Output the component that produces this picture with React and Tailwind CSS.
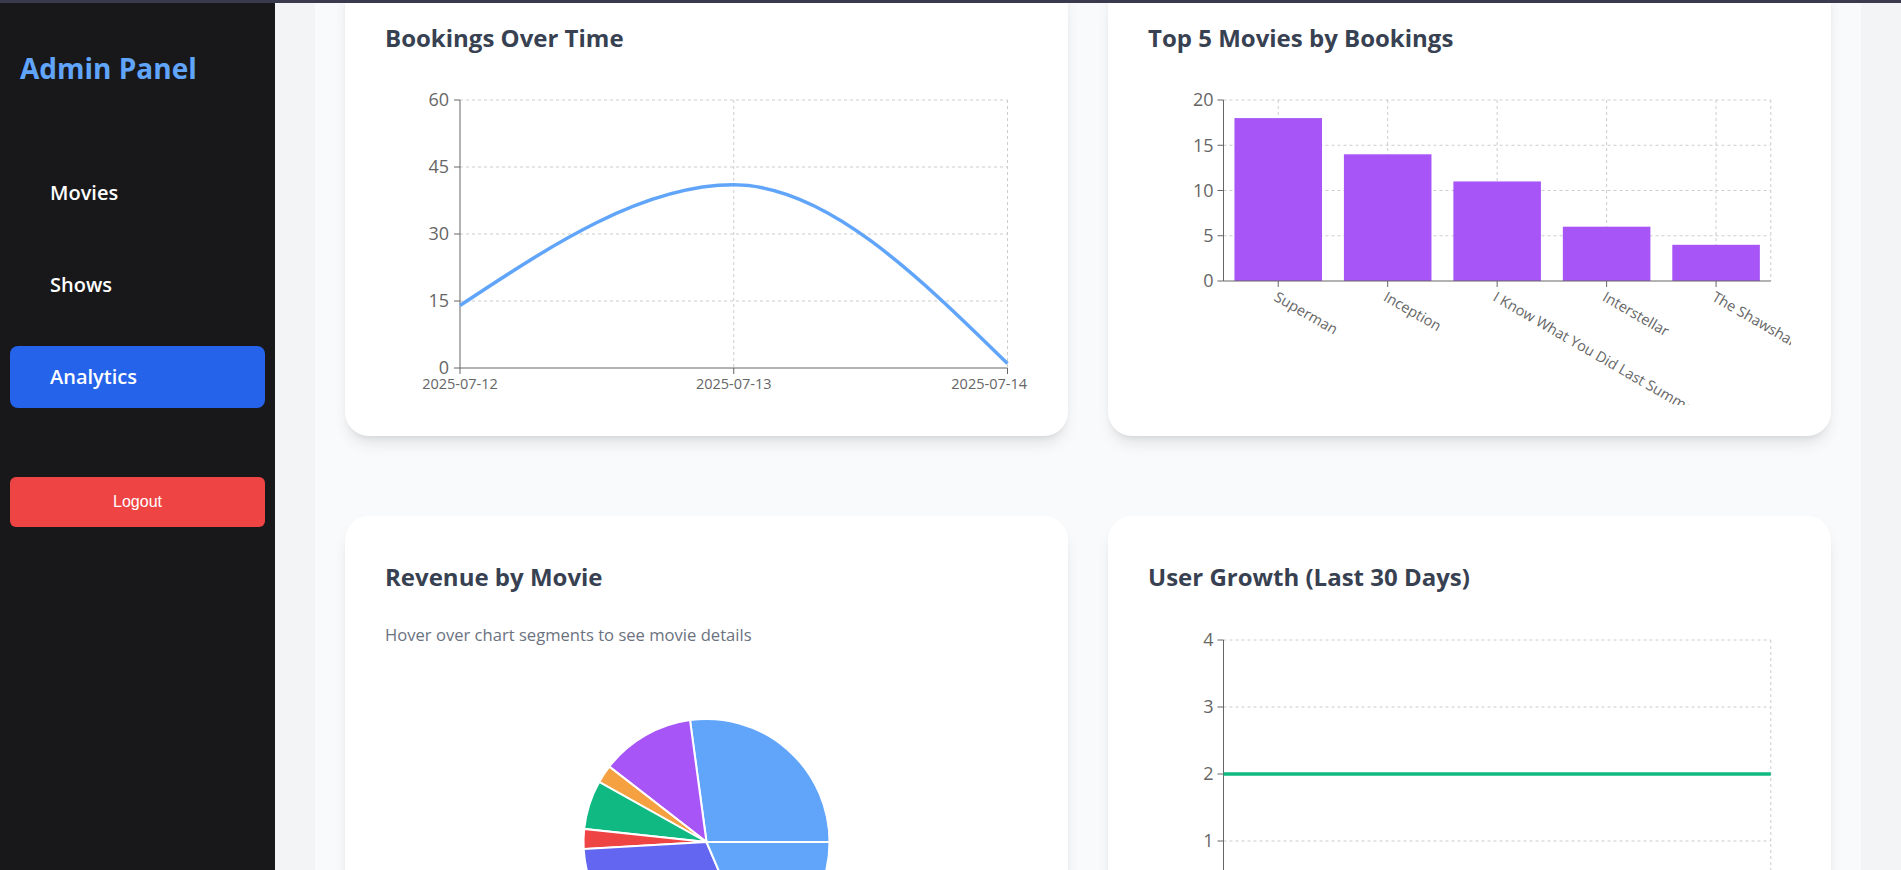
import React from "react";

const FONT = "'Open Sans', 'Noto Sans', sans-serif";
const GRID = "#ccc";
const AXIS = "#666";

function monotone(pts) {
  const n = pts.length;
  const t = new Array(n).fill(0);
  const sign = (x) => (x < 0 ? -1 : 1);
  for (let i = 1; i < n - 1; i++) {
    const [x0, y0] = pts[i - 1];
    const [x1, y1] = pts[i];
    const [x2, y2] = pts[i + 1];
    const h0 = x1 - x0, h1 = x2 - x1;
    const s0 = (y1 - y0) / h0, s1 = (y2 - y1) / h1;
    const p = (s0 * h1 + s1 * h0) / (h0 + h1);
    t[i] = (sign(s0) + sign(s1)) * Math.min(Math.abs(s0), Math.abs(s1), 0.5 * Math.abs(p)) || 0;
  }
  t[0] = (3 * (pts[1][1] - pts[0][1]) / (pts[1][0] - pts[0][0]) - t[1]) / 2;
  t[n - 1] = (3 * (pts[n - 1][1] - pts[n - 2][1]) / (pts[n - 1][0] - pts[n - 2][0]) - t[n - 2]) / 2;
  let d = `M${pts[0][0]},${pts[0][1]}`;
  for (let i = 0; i < n - 1; i++) {
    const [x0, y0] = pts[i];
    const [x1, y1] = pts[i + 1];
    const dx = (x1 - x0) / 3;
    d += `C${x0 + dx},${y0 + dx * t[i]},${x1 - dx},${y1 - dx * t[i + 1]},${x1},${y1}`;
  }
  return d;
}

function BookingsChart() {
  const L = 75, R = 622.5, T = 22, B = 290;
  const sy = (v) => B - ((B - T) * v) / 60;
  const xs = [L, (L + R) / 2, R];
  const data = [14, 41, 1];
  const path = monotone(xs.map((x, i) => [x, sy(data[i])]));
  const ticks = [0, 15, 30, 45, 60];
  return (
    <svg width="643" height="318" style={{ fontFamily: FONT }}>
      {ticks.slice(1).map((v) => (
        <line key={v} x1={L} x2={R} y1={sy(v)} y2={sy(v)} stroke={GRID} strokeDasharray="3 3" />
      ))}
      {xs.slice(1).map((x) => (
        <line key={x} x1={x} x2={x} y1={T} y2={B} stroke={GRID} strokeDasharray="3 3" />
      ))}
      <line x1={L} x2={L} y1={T} y2={B} stroke={AXIS} />
      <line x1={L} x2={R} y1={B} y2={B} stroke={AXIS} />
      {ticks.map((v) => (
        <g key={v}>
          <line x1={L - 6} x2={L} y1={sy(v)} y2={sy(v)} stroke={AXIS} />
          <text x={L - 11} y={sy(v)} dy="0.355em" textAnchor="end" fontSize="18" fill={AXIS}>{v}</text>
        </g>
      ))}
      {xs.map((x) => (
        <line key={x} x1={x} x2={x} y1={B} y2={B + 6} stroke={AXIS} />
      ))}
      <text x={xs[0]} y={311} textAnchor="middle" fontSize="14.5" fill={AXIS}>2025-07-12</text>
      <text x={xs[1]} y={311} textAnchor="middle" fontSize="14.5" fill={AXIS}>2025-07-13</text>
      <text x={642} y={311} textAnchor="end" fontSize="14.5" fill={AXIS}>2025-07-14</text>
      <path d={path} fill="none" stroke="#60a5fa" strokeWidth="3.5" />
    </svg>
  );
}

function TopMoviesChart() {
  const L = 75.5, R = 622.8, T = 22, B = 203;
  const sy = (v) => B - ((B - T) * v) / 20;
  const data = [
    ["Superman", 18],
    ["Inception", 14],
    ["I Know What You Did Last Summer", 11],
    ["Interstellar", 6],
    ["The Shawshank Redemption", 4],
  ];
  const cw = (R - L) / data.length;
  const bw = cw * 0.8;
  const ticks = [0, 5, 10, 15, 20];
  return (
    <svg width="643" height="327" style={{ fontFamily: FONT }} className="overflow-hidden">
      {ticks.slice(1).map((v) => (
        <line key={v} x1={L} x2={R} y1={sy(v)} y2={sy(v)} stroke={GRID} strokeDasharray="3 3" />
      ))}
      {data.map((d, i) => (
        <line key={i} x1={L + cw * (i + 0.5)} x2={L + cw * (i + 0.5)} y1={T} y2={B} stroke={GRID} strokeDasharray="3 3" />
      ))}
      <line x1={R} x2={R} y1={T} y2={B} stroke={GRID} strokeDasharray="3 3" />
      {data.map((d, i) => (
        <rect key={i} x={L + cw * i + (cw - bw) / 2} y={sy(d[1])} width={bw} height={B - sy(d[1])} fill="#a855f7" />
      ))}
      <line x1={L} x2={L} y1={T} y2={B} stroke={AXIS} />
      <line x1={L} x2={R} y1={B} y2={B} stroke={AXIS} />
      {ticks.map((v) => (
        <g key={v}>
          <line x1={L - 6} x2={L} y1={sy(v)} y2={sy(v)} stroke={AXIS} />
          <text x={L - 10} y={sy(v)} dy="0.355em" textAnchor="end" fontSize="18" fill={AXIS}>{v}</text>
        </g>
      ))}
      {data.map((d, i) => {
        const cx = L + cw * (i + 0.5);
        return (
          <g key={i}>
            <line x1={cx} x2={cx} y1={B} y2={B + 6} stroke={AXIS} />
            <text x={cx} y={B + 10} dy="0.71em" textAnchor="start" fontSize="14.5" fill={AXIS} transform={`rotate(30, ${cx}, ${B + 10})`}>
              {d[0]}
            </text>
          </g>
        );
      })}
    </svg>
  );
}

function RevenuePie() {
  const cx = 321.5, cy = 171, r = 123;
  const slices = [
    [0, 97.7, "#60a5fa"],
    [97.7, 142.2, "#a855f7"],
    [142.2, 150.8, "#f5a142"],
    [150.8, 173.9, "#10b981"],
    [173.9, 183.3, "#ef4444"],
    [183.3, 293.1, "#6366f1"],
    [293.1, 360, "#60a5fa"],
  ];
  const pt = (a) => {
    const rad = (a * Math.PI) / 180;
    return [cx + r * Math.cos(rad), cy - r * Math.sin(rad)];
  };
  return (
    <svg width="643" height="400">
      {slices.map(([a0, a1, c], i) => {
        const [x0, y0] = pt(a0);
        const [x1, y1] = pt(a1);
        const large = a1 - a0 > 180 ? 1 : 0;
        return (
          <path
            key={i}
            d={`M${cx},${cy}L${x0},${y0}A${r},${r},0,${large},0,${x1},${y1}Z`}
            fill={c}
            stroke="#fff"
            strokeWidth="2"
          />
        );
      })}
    </svg>
  );
}

function UserGrowthChart() {
  const L = 75.5, R = 622.8, T = 23, step = 67;
  const sy = (v) => T + (4 - v) * step;
  const ticks = [0, 1, 2, 3, 4];
  return (
    <svg width="643" height="330" style={{ fontFamily: FONT }}>
      {ticks.slice(1).map((v) => (
        <line key={v} x1={L} x2={R} y1={sy(v)} y2={sy(v)} stroke={GRID} strokeDasharray="3 3" />
      ))}
      <line x1={R} x2={R} y1={T} y2={sy(0)} stroke={GRID} strokeDasharray="3 3" />
      <line x1={L} x2={L} y1={T} y2={sy(0)} stroke={AXIS} />
      <line x1={L} x2={R} y1={sy(0)} y2={sy(0)} stroke={AXIS} />
      {ticks.map((v) => (
        <g key={v}>
          <line x1={L - 6} x2={L} y1={sy(v)} y2={sy(v)} stroke={AXIS} />
          <text x={L - 10} y={sy(v)} dy="0.355em" textAnchor="end" fontSize="18" fill={AXIS}>{v}</text>
        </g>
      ))}
      <line x1={L} x2={R} y1={sy(2)} y2={sy(2)} stroke="#10b981" strokeWidth="3.5" />
    </svg>
  );
}

function Card({ title, children, bottom = "pb-10" }) {
  return (
    <div className={`rounded-3xl bg-white px-10 pt-[45px] ${bottom} shadow-lg`}>
      <h2 className="text-2xl leading-8 font-bold text-[#374151]">{title}</h2>
      {children}
    </div>
  );
}

export default function App() {
  return (
    <div className="flex h-screen flex-col overflow-hidden font-['Open_Sans','Noto_Sans',sans-serif]">
      <div className="h-[3px] shrink-0 bg-[#393a4e]" />
      <div className="flex min-h-0 flex-1">
        <aside className="w-[275px] shrink-0 bg-[#18181b] px-[10px] pt-[47px]">
          <h1 className="pl-[10px] text-[28px] leading-9 font-bold text-[#60a5fa]">Admin Panel</h1>
          <nav className="mt-[76px] flex flex-col gap-[30px]">
            <a className="rounded-lg py-[17px] pl-10 text-xl leading-7 font-semibold text-white">Movies</a>
            <a className="rounded-lg py-[17px] pl-10 text-xl leading-7 font-semibold text-white">Shows</a>
            <a className="rounded-lg bg-[#2563eb] py-[17px] pl-10 text-xl leading-7 font-semibold text-white">Analytics</a>
          </nav>
          <button className="mt-[69px] w-full rounded-md bg-[#ef4444] py-[13px] font-['Liberation_Sans',Arial,sans-serif] text-base leading-6 text-white">
            Logout
          </button>
        </aside>
        <main className="min-w-0 flex-1 overflow-hidden bg-[#f3f4f6] px-10">
          <div className="-mt-[26px] bg-[#f9fafb] px-[30px] pb-10">
            <div className="grid grid-cols-2 gap-x-10 gap-y-20">
              <Card title="Bookings Over Time">
                <div className="mt-6">
                  <BookingsChart />
                </div>
              </Card>
              <Card title="Top 5 Movies by Bookings" bottom="pb-[31px]">
                <div className="mt-6">
                  <TopMoviesChart />
                </div>
              </Card>
              <Card title="Revenue by Movie">
                <p className="mt-[30px] text-[16.6px] leading-6 text-[#6b7280]">Hover over chart segments to see movie details</p>
                <div className="mt-6">
                  <RevenuePie />
                </div>
              </Card>
              <Card title="User Growth (Last 30 Days)">
                <div className="mt-6">
                  <UserGrowthChart />
                </div>
              </Card>
            </div>
          </div>
        </main>
      </div>
    </div>
  );
}
